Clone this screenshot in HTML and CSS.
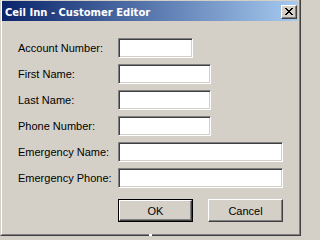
FILE: index.html
```html
<!DOCTYPE html>
<html>
<head>
<meta charset="utf-8">
<title>Ceil Inn - Customer Editor</title>
<link rel="stylesheet" href="styles.css">
</head>
<body>
<div class="window">
  <div class="frame">
    <div class="titlebar">
      <span class="title">Ceil Inn - Customer Editor</span>
      <div class="close">
        <svg width="8" height="7" viewBox="0 0 8 7" shape-rendering="crispEdges"><path d="M0 0h2v1H0zM6 0h2v1H6zM1 1h2v1H1zM5 1h2v1H5zM2 2h4v1H2zM3 3h2v1H3zM2 4h4v1H2zM1 5h2v1H1zM5 5h2v1H5zM0 6h2v1H0zM6 6h2v1H6z" fill="#000"/></svg>
      </div>
    </div>
    <div class="body">
      <div class="form">
        <label class="lbl">Account Number:</label><div class="field w-s"></div>
        <label class="lbl">First Name:</label><div class="field w-m"></div>
        <label class="lbl">Last Name:</label><div class="field w-m"></div>
        <label class="lbl">Phone Number:</label><div class="field w-m"></div>
        <label class="lbl">Emergency Name:</label><div class="field w-l"></div>
        <label class="lbl">Emergency Phone:</label><div class="field w-l"></div>
      </div>
      <div class="buttons">
        <div class="btn default"><span class="btn-in">OK</span></div>
        <div class="btn"><span class="btn-in">Cancel</span></div>
      </div>
    </div>
  </div>
  <div class="cursor"></div>
</div>
</body>
</html>
```
FILE: styles.css
```css
html, body {
  margin: 0;
  padding: 0;
  background: #d4d0c8;
}
body {
  font-family: "Liberation Sans", Arial, sans-serif;
  font-size: 11px;
  color: #000;
}
.window {
  position: relative;
  width: 301px;
  height: 236px;
  box-sizing: border-box;
  border-left: 1px solid #d4d0c8;
  border-right: 1px solid #404040;
  border-bottom: 1px solid #404040;
}
.frame {
  height: 100%;
  box-sizing: border-box;
  border-left: 1px solid #ffffff;
  border-right: 1px solid #808080;
  border-bottom: 1px solid #808080;
  padding: 1px 1px 1px 0;
  display: flex;
  flex-direction: column;
}
.titlebar {
  height: 20px;
  background: linear-gradient(to right, #0a246a, #a6caf0);
  display: flex;
  align-items: center;
  justify-content: space-between;
  padding: 0 1px 0 3px;
}
.title {
  font-family: "DejaVu Sans", Verdana, sans-serif;
  font-weight: bold;
  font-size: 10px;
  color: #fff;
  padding-top: 2px;
}
.close {
  width: 16px;
  height: 14px;
  box-sizing: border-box;
  background: #d4d0c8;
  border-top: 1px solid #fff;
  border-left: 1px solid #fff;
  border-right: 1px solid #404040;
  border-bottom: 1px solid #404040;
  box-shadow: inset -1px -1px 0 #808080;
  display: flex;
  align-items: center;
  justify-content: center;
  margin-top: 1px;
}
.close svg {
  display: block;
  margin-left: -1px;
  margin-top: -1px;
}
.body {
  padding: 17px 0 0 16px;
}
.form {
  display: grid;
  grid-template-columns: 100px auto;
  grid-auto-rows: 20px;
  row-gap: 6px;
  align-items: center;
}
.lbl {
  line-height: 20px;
  white-space: nowrap;
}
.field {
  height: 20px;
  box-sizing: border-box;
  background: #fff;
  border-top: 1px solid #808080;
  border-left: 1px solid #808080;
  border-right: 1px solid #fff;
  border-bottom: 1px solid #fff;
  box-shadow: inset 1px 1px 0 #404040, inset -1px -1px 0 #d4d0c8;
}
.w-s { width: 75px; }
.w-m { width: 93px; }
.w-l { width: 165px; }
.buttons {
  display: flex;
  gap: 15px;
  margin: 11px 0 0 100px;
}
.btn {
  width: 75px;
  height: 23px;
  box-sizing: border-box;
  display: flex;
}
.btn-in {
  flex: 1;
  box-sizing: border-box;
  border-top: 1px solid #fff;
  border-left: 1px solid #fff;
  border-right: 1px solid #404040;
  border-bottom: 1px solid #404040;
  box-shadow: inset -1px -1px 0 #808080;
  display: flex;
  align-items: center;
  justify-content: center;
}
.btn.default {
  border: 1px solid #000;
}
.cursor {
  position: absolute;
  left: 148px;
  top: 234px;
  width: 3px;
  height: 2px;
  background: #fff;
}
```
